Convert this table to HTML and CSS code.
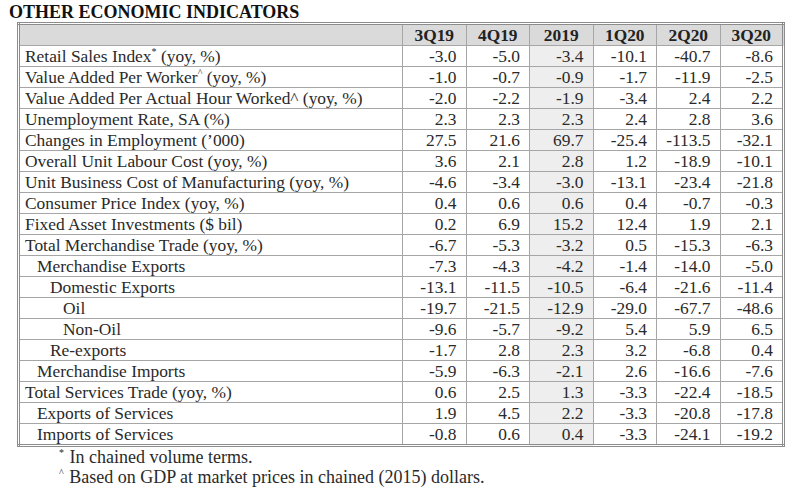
FILE: index.html
```html
<!DOCTYPE html>
<html>
<head>
<meta charset="utf-8">
<link rel="stylesheet" href="styles.css">
</head>
<body>
<div class="page">
  <h1 class="title">OTHER ECONOMIC INDICATORS</h1>
  <table class="ind">
    <colgroup>
      <col class="c-label">
      <col class="c-num"><col class="c-num"><col class="c-num yr"><col class="c-num"><col class="c-num"><col class="c-num">
    </colgroup>
    <thead>
      <tr><th></th><th>3Q19</th><th>4Q19</th><th>2019</th><th>1Q20</th><th>2Q20</th><th>3Q20</th></tr>
    </thead>
    <tbody>
      <tr><td class="lbl">Retail Sales Index<sup>*</sup> (yoy, %)</td><td>-3.0</td><td>-5.0</td><td class="yr">-3.4</td><td>-10.1</td><td>-40.7</td><td>-8.6</td></tr>
      <tr><td class="lbl">Value Added Per Worker<sup>^</sup> (yoy, %)</td><td>-1.0</td><td>-0.7</td><td class="yr">-0.9</td><td>-1.7</td><td>-11.9</td><td>-2.5</td></tr>
      <tr><td class="lbl">Value Added Per Actual Hour Worked^ (yoy, %)</td><td>-2.0</td><td>-2.2</td><td class="yr">-1.9</td><td>-3.4</td><td>2.4</td><td>2.2</td></tr>
      <tr><td class="lbl">Unemployment Rate, SA (%)</td><td>2.3</td><td>2.3</td><td class="yr">2.3</td><td>2.4</td><td>2.8</td><td>3.6</td></tr>
      <tr><td class="lbl">Changes in Employment (’000)</td><td>27.5</td><td>21.6</td><td class="yr">69.7</td><td>-25.4</td><td>-113.5</td><td>-32.1</td></tr>
      <tr><td class="lbl">Overall Unit Labour Cost (yoy, %)</td><td>3.6</td><td>2.1</td><td class="yr">2.8</td><td>1.2</td><td>-18.9</td><td>-10.1</td></tr>
      <tr><td class="lbl">Unit Business Cost of Manufacturing (yoy, %)</td><td>-4.6</td><td>-3.4</td><td class="yr">-3.0</td><td>-13.1</td><td>-23.4</td><td>-21.8</td></tr>
      <tr><td class="lbl">Consumer Price Index (yoy, %)</td><td>0.4</td><td>0.6</td><td class="yr">0.6</td><td>0.4</td><td>-0.7</td><td>-0.3</td></tr>
      <tr><td class="lbl">Fixed Asset Investments ($ bil)</td><td>0.2</td><td>6.9</td><td class="yr">15.2</td><td>12.4</td><td>1.9</td><td>2.1</td></tr>
      <tr><td class="lbl">Total Merchandise Trade (yoy, %)</td><td>-6.7</td><td>-5.3</td><td class="yr">-3.2</td><td>0.5</td><td>-15.3</td><td>-6.3</td></tr>
      <tr><td class="lbl l1">Merchandise Exports</td><td>-7.3</td><td>-4.3</td><td class="yr">-4.2</td><td>-1.4</td><td>-14.0</td><td>-5.0</td></tr>
      <tr><td class="lbl l2">Domestic Exports</td><td>-13.1</td><td>-11.5</td><td class="yr">-10.5</td><td>-6.4</td><td>-21.6</td><td>-11.4</td></tr>
      <tr><td class="lbl l3">Oil</td><td>-19.7</td><td>-21.5</td><td class="yr">-12.9</td><td>-29.0</td><td>-67.7</td><td>-48.6</td></tr>
      <tr><td class="lbl l3">Non-Oil</td><td>-9.6</td><td>-5.7</td><td class="yr">-9.2</td><td>5.4</td><td>5.9</td><td>6.5</td></tr>
      <tr><td class="lbl l2">Re-exports</td><td>-1.7</td><td>2.8</td><td class="yr">2.3</td><td>3.2</td><td>-6.8</td><td>0.4</td></tr>
      <tr><td class="lbl l1">Merchandise Imports</td><td>-5.9</td><td>-6.3</td><td class="yr">-2.1</td><td>2.6</td><td>-16.6</td><td>-7.6</td></tr>
      <tr><td class="lbl">Total Services Trade (yoy, %)</td><td>0.6</td><td>2.5</td><td class="yr">1.3</td><td>-3.3</td><td>-22.4</td><td>-18.5</td></tr>
      <tr><td class="lbl l1">Exports of Services</td><td>1.9</td><td>4.5</td><td class="yr">2.2</td><td>-3.3</td><td>-20.8</td><td>-17.8</td></tr>
      <tr><td class="lbl l1">Imports of Services</td><td>-0.8</td><td>0.6</td><td class="yr">0.4</td><td>-3.3</td><td>-24.1</td><td>-19.2</td></tr>
    </tbody>
  </table>
  <div class="notes">
    <p class="note"><sup>*</sup> In chained volume terms.</p>
    <p class="note"><sup>^</sup> Based on GDP at market prices in chained (2015) dollars.</p>
  </div>
</div>
</body>
</html>
```
FILE: styles.css
```css
html, body {
  margin: 0;
  padding: 0;
  background: #ffffff;
}
.page {
  width: 800px;
  height: 492px;
  font-family: "Liberation Serif", "Times New Roman", serif;
  color: #1a1a1a;
  padding: 3px 0 0 0;
  box-sizing: border-box;
}
.title {
  margin: 0 0 0 9px;
  font-size: 18px;
  line-height: 19px;
  font-weight: bold;
  color: #111;
}
.ind {
  margin-left: 17px;
  border-collapse: collapse;
  border: 3px double #8c8c8c;
  font-size: 17.4px;
  table-layout: fixed;
  width: 768px;
}
.c-label { width: 384px; }
.c-num { width: 63.5px; }
.ind th, .ind td {
  border: 1px solid #a6a6a6;
  padding: 0;
  height: 20px;
  line-height: 20px;
  white-space: nowrap;
}
.ind th {
  background: #dadada;
  font-weight: bold;
  text-align: center;
  color: #222;
}
.ind td {
  text-align: right;
  padding-right: 9px;
  color: #2a2a2a;
}
.ind td.yr {
  background: #eeeeee;
}
.ind td.lbl {
  text-align: left;
  padding-left: 5px;
  padding-right: 0;
}
.ind td.l1 { padding-left: 17px; }
.ind td.l2 { padding-left: 30px; }
.ind td.l3 { padding-left: 43px; }
.ind sup {
  font-size: 10px;
  line-height: 0;
  vertical-align: 7px;
}
.notes {
  margin-left: 59px;
  margin-top: 0;
}
.note {
  margin: 0;
  font-size: 18px;
  line-height: 20px;
  color: #2a2a2a;
}
.note sup {
  font-size: 10px;
  line-height: 0;
  vertical-align: 7px;
  margin-right: 1px;
}
```
